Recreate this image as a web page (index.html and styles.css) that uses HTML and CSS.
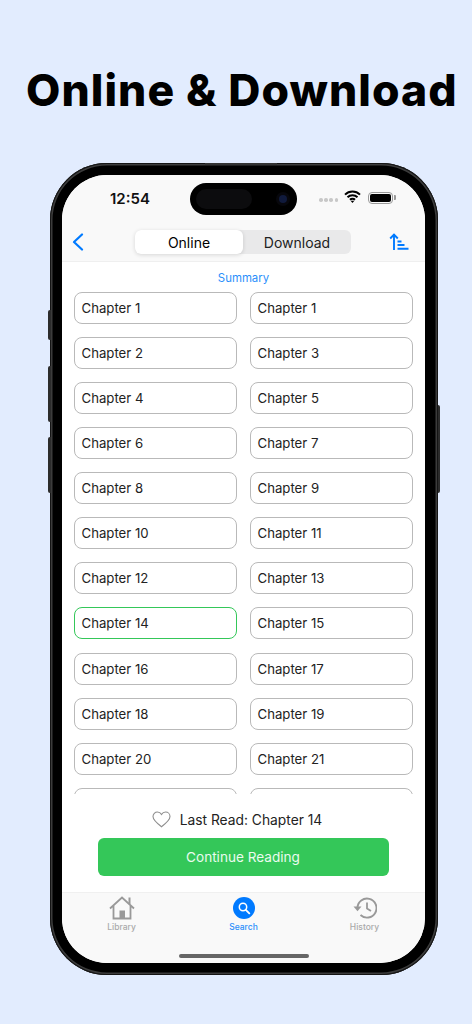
FILE: index.html
```html
<!DOCTYPE html>
<html lang="en">
<head>
<meta charset="utf-8">
<title>Online &amp; Download</title>
<link rel="stylesheet" href="styles.css">
</head>
<body>
<h1 class="headline">Online &amp; Download</h1>
<div class="phone">
  <span class="side side-mute"></span>
  <span class="side side-up"></span>
  <span class="side side-down"></span>
  <span class="side side-power"></span>
  <span class="speaker"></span>
  <div class="screen">
    <div class="top">
      <div class="status">
        <span class="time">12:54</span>
        <div class="island"><span class="island-pill"></span><span class="lens"></span></div>
        <div class="status-right">
          <span class="dots"><i></i><i></i><i></i><i></i></span>
          <svg class="wifi" width="17" height="13" viewBox="0 0 17 13"><path d="M1 4.600a10.600 10.600 0 0 1 15 0M3.500 7.300a7 7 0 0 1 10 0M6 9.800a3.400 3.400 0 0 1 5 0" fill="none" stroke="#000" stroke-width="2"/><path d="M8.500 13l-1.900-2.200h3.800z" fill="#000"/></svg>
          <span class="battery"><span class="battery-fill"></span></span>
        </div>
      </div>
      <div class="nav">
        <svg class="back" width="12" height="18" viewBox="0 0 12 18"><path d="M10 1.500L2 9l8 7.500" fill="none" stroke="#007aff" stroke-width="2.200" stroke-linecap="round" stroke-linejoin="round"/></svg>
        <div class="segments">
          <span class="segment segment-on">Online</span>
          <span class="segment">Download</span>
        </div>
        <svg class="sort" width="20" height="18" viewBox="0 0 20 18"><path d="M5 17V2M1.200 5.500L5 1.600l3.800 3.900M8.500 8.500h4M8.500 12h7M8.500 15.800h11" fill="none" stroke="#007aff" stroke-width="1.900"/></svg>
      </div>
    </div>
    <div class="list">
      <div class="summary">Summary</div>
      <div class="grid">
        <div class="chapter">Chapter 1</div><div class="chapter">Chapter 1</div>
        <div class="chapter">Chapter 2</div><div class="chapter">Chapter 3</div>
        <div class="chapter">Chapter 4</div><div class="chapter">Chapter 5</div>
        <div class="chapter">Chapter 6</div><div class="chapter">Chapter 7</div>
        <div class="chapter">Chapter 8</div><div class="chapter">Chapter 9</div>
        <div class="chapter">Chapter 10</div><div class="chapter">Chapter 11</div>
        <div class="chapter">Chapter 12</div><div class="chapter">Chapter 13</div>
        <div class="chapter chapter-current">Chapter 14</div><div class="chapter">Chapter 15</div>
        <div class="chapter">Chapter 16</div><div class="chapter">Chapter 17</div>
        <div class="chapter">Chapter 18</div><div class="chapter">Chapter 19</div>
        <div class="chapter">Chapter 20</div><div class="chapter">Chapter 21</div>
        <div class="chapter"></div><div class="chapter"></div>
      </div>
    </div>
    <div class="footer">
      <div class="last-read">
        <svg class="heart" width="19" height="17" viewBox="0 0 19 17"><path d="M9.500 15.800C4 11.600 1 8.800 1 5.600 1 3 3 1 5.400 1c1.700 0 3.200.9 4.100 2.500C10.400 1.900 11.900 1 13.600 1 16 1 18 3 18 5.600c0 3.200-3 6-8.500 10.200z" fill="none" stroke="#8e8e8e" stroke-width="1.100"/></svg>
        <span>Last Read: Chapter 14</span>
      </div>
      <div class="continue">Continue Reading</div>
    </div>
    <div class="tabs">
      <div class="tab">
        <svg width="26" height="24" viewBox="0 0 26 24"><path d="M1 12.500L13 1.500l12 11M4.500 10v12.500h17V10" fill="none" stroke="#999" stroke-width="1.800"/><path d="M10.500 14.500h5.500v8h-5.500zM19.500 1.500h2v6.500h-2z" fill="#999"/></svg>
        <span>Library</span>
      </div>
      <div class="tab tab-on">
        <svg width="22" height="22" viewBox="0 0 22 22"><circle cx="11" cy="11" r="11" fill="#007aff"/><circle cx="10" cy="10" r="3.700" fill="none" stroke="#fff" stroke-width="1.500"/><path d="M12.800 12.800l3.500 3.500" stroke="#fff" stroke-width="1.900" stroke-linecap="round"/></svg>
        <span>Search</span>
      </div>
      <div class="tab">
        <svg width="24" height="22" viewBox="0 0 24 22"><path d="M4.500 11a9.500 9.500 0 1 1 3 7" fill="none" stroke="#999" stroke-width="1.900"/><path d="M0.500 9.500h8l-4 4.800z" fill="#999"/><path d="M14 5.500v6l4 2.500" fill="none" stroke="#999" stroke-width="1.800"/></svg>
        <span>History</span>
      </div>
      <span class="home-bar"></span>
    </div>
  </div>
</div>
</body>
</html>
```
FILE: styles.css
```css
* { box-sizing: border-box; }
html, body { margin: 0; height: 1024px; overflow: hidden; }
body {
  background: #e2ecfe;
  font-family: Inter, "Liberation Sans", sans-serif;
  color: #1c1c1e;
  padding-top: 60px;
}
.headline {
  margin: 0 0 0 26px;
  height: 60px;
  line-height: 60px;
  font-size: 44.500px;
  font-weight: 800;
  letter-spacing: 1.050px;
  color: #000;
  white-space: nowrap;
}
.phone {
  position: relative;
  width: 388px;
  height: 812px;
  margin: 43px 0 0 50px;
  padding: 12px;
  background: #000;
  border-radius: 57px;
  box-shadow: inset 0 0 0 1px #151515, inset 0 0 0 2.500px #3c3c3c;
}
.side { position: absolute; background: #2c2c2c; width: 2.500px; left: -2px; border-radius: 2px 0 0 2px; }
.side-mute { top: 147px; height: 30px; }
.side-up { top: 203px; height: 56px; }
.side-down { top: 274px; height: 56px; }
.side-power { left: auto; right: -2px; top: 242px; height: 88px; border-radius: 0 2px 2px 0; }
.speaker { position: absolute; top: 0; left: 155px; width: 72px; height: 2px; background: #333; }
.screen {
  position: relative;
  width: 363px;
  height: 788px;
  background: #fff;
  border-radius: 45px;
  overflow: hidden;
  display: flex;
  flex-direction: column;
}
.top { background: #f9f9f9; border-bottom: 1px solid #efefef; height: 87px; flex: none; }
.status { display: flex; align-items: center; height: 46px; position: relative; padding: 0 32px 0 48px; }
.time { font-size: 15px; font-weight: 600; color: #111; }
.island {
  position: absolute; left: 128px; top: 8px;
  width: 107px; height: 32px; border-radius: 16px; background: #000;
  display: flex; align-items: center; justify-content: space-between; padding: 0 10px 0 6px;
}
.island-pill { width: 56px; height: 20px; border-radius: 10px; background: #0c0c0e; }
.lens { width: 8px; height: 8px; border-radius: 50%; background: #101a3c; box-shadow: 0 0 0 3px #07070c; }
.status-right { margin-left: auto; display: flex; align-items: center; gap: 4px; }
.dots { display: flex; gap: 1.600px; margin-top: 4px; margin-right: 2px; }
.dots i { width: 3.500px; height: 3.500px; border-radius: 50%; background: #c8c8c8; }
.wifi { margin-top: -3px; }
.battery {
  position: relative;
  width: 25px; height: 12px; margin-left: 3px; border: 1.500px solid #9a9a9a; border-radius: 4px; padding: 1px; margin-top: -1px;
  display: flex;
}
.battery::after { content: ""; position: absolute; right: -3.500px; top: 2px; width: 1.500px; height: 5px; background: #9a9a9a; border-radius: 0 1px 1px 0; }
.battery-fill { flex: 1; background: #000; border-radius: 2px; }
.nav { display: flex; align-items: center; justify-content: space-between; height: 24px; margin-top: 9px; padding: 0 16px 0 10px; position: relative; }
.segments {
  position: absolute; left: 73px; top: 0;
  width: 216px; height: 24px;
  display: flex; background: #e9e9ea; border-radius: 6px;
}
.segment { flex: 1; display: flex; align-items: center; justify-content: center; font-size: 14px; color: #222; }
.segment-on { background: #fff; border-radius: 6px; box-shadow: 0 1px 4px rgba(0,0,0,.14); color: #000; }
.list { height: 532px; flex: none; overflow: hidden; padding: 0 12px; }
.summary { text-align: center; color: #2b8ffb; font-size: 11.400px; line-height: 32px; height: 30px; }
.grid { display: grid; grid-template-columns: 163px 163px; column-gap: 13px; row-gap: 13.070px; }
.chapter {
  height: 32px; border: 1.200px solid #b9b9b9; border-radius: 8px;
  display: flex; align-items: center; padding-left: 6.500px;
  font-size: 13.200px; color: #222; background: #fff;
}
.chapter-current { border: 1.500px solid #34c759; }
.footer { flex: 1; display: flex; flex-direction: column; align-items: center; }
.last-read { display: flex; align-items: center; gap: 9px; height: 44px; padding-top: 7px; margin-left: -13px; font-size: 13.800px; color: #222; }
.continue {
  width: 291px; height: 38px; margin-right: 1px; background: #34c759; color: #eafbee; border-radius: 6px;
  display: flex; align-items: center; justify-content: center; font-size: 13.600px;
}
.tabs {
  position: relative; height: 71px; flex: none; background: #f9f9f9; border-top: 1px solid #f0f0f0;
  display: grid; grid-template-columns: 1fr 1fr 1fr; padding: 3px 0 0;
}
.tab { display: flex; flex-direction: column; align-items: center; gap: 2px; font-size: 8.500px; font-weight: 500; color: #aaa; height: 40px; }
.tab svg { flex: none; height: 24px; }
.tab:first-child { margin-left: -2px; }
.tab-on { color: #2b8ffb; }
.home-bar { position: absolute; left: 117px; bottom: 5px; width: 130px; height: 4px; border-radius: 2px; background: #666; }
```
